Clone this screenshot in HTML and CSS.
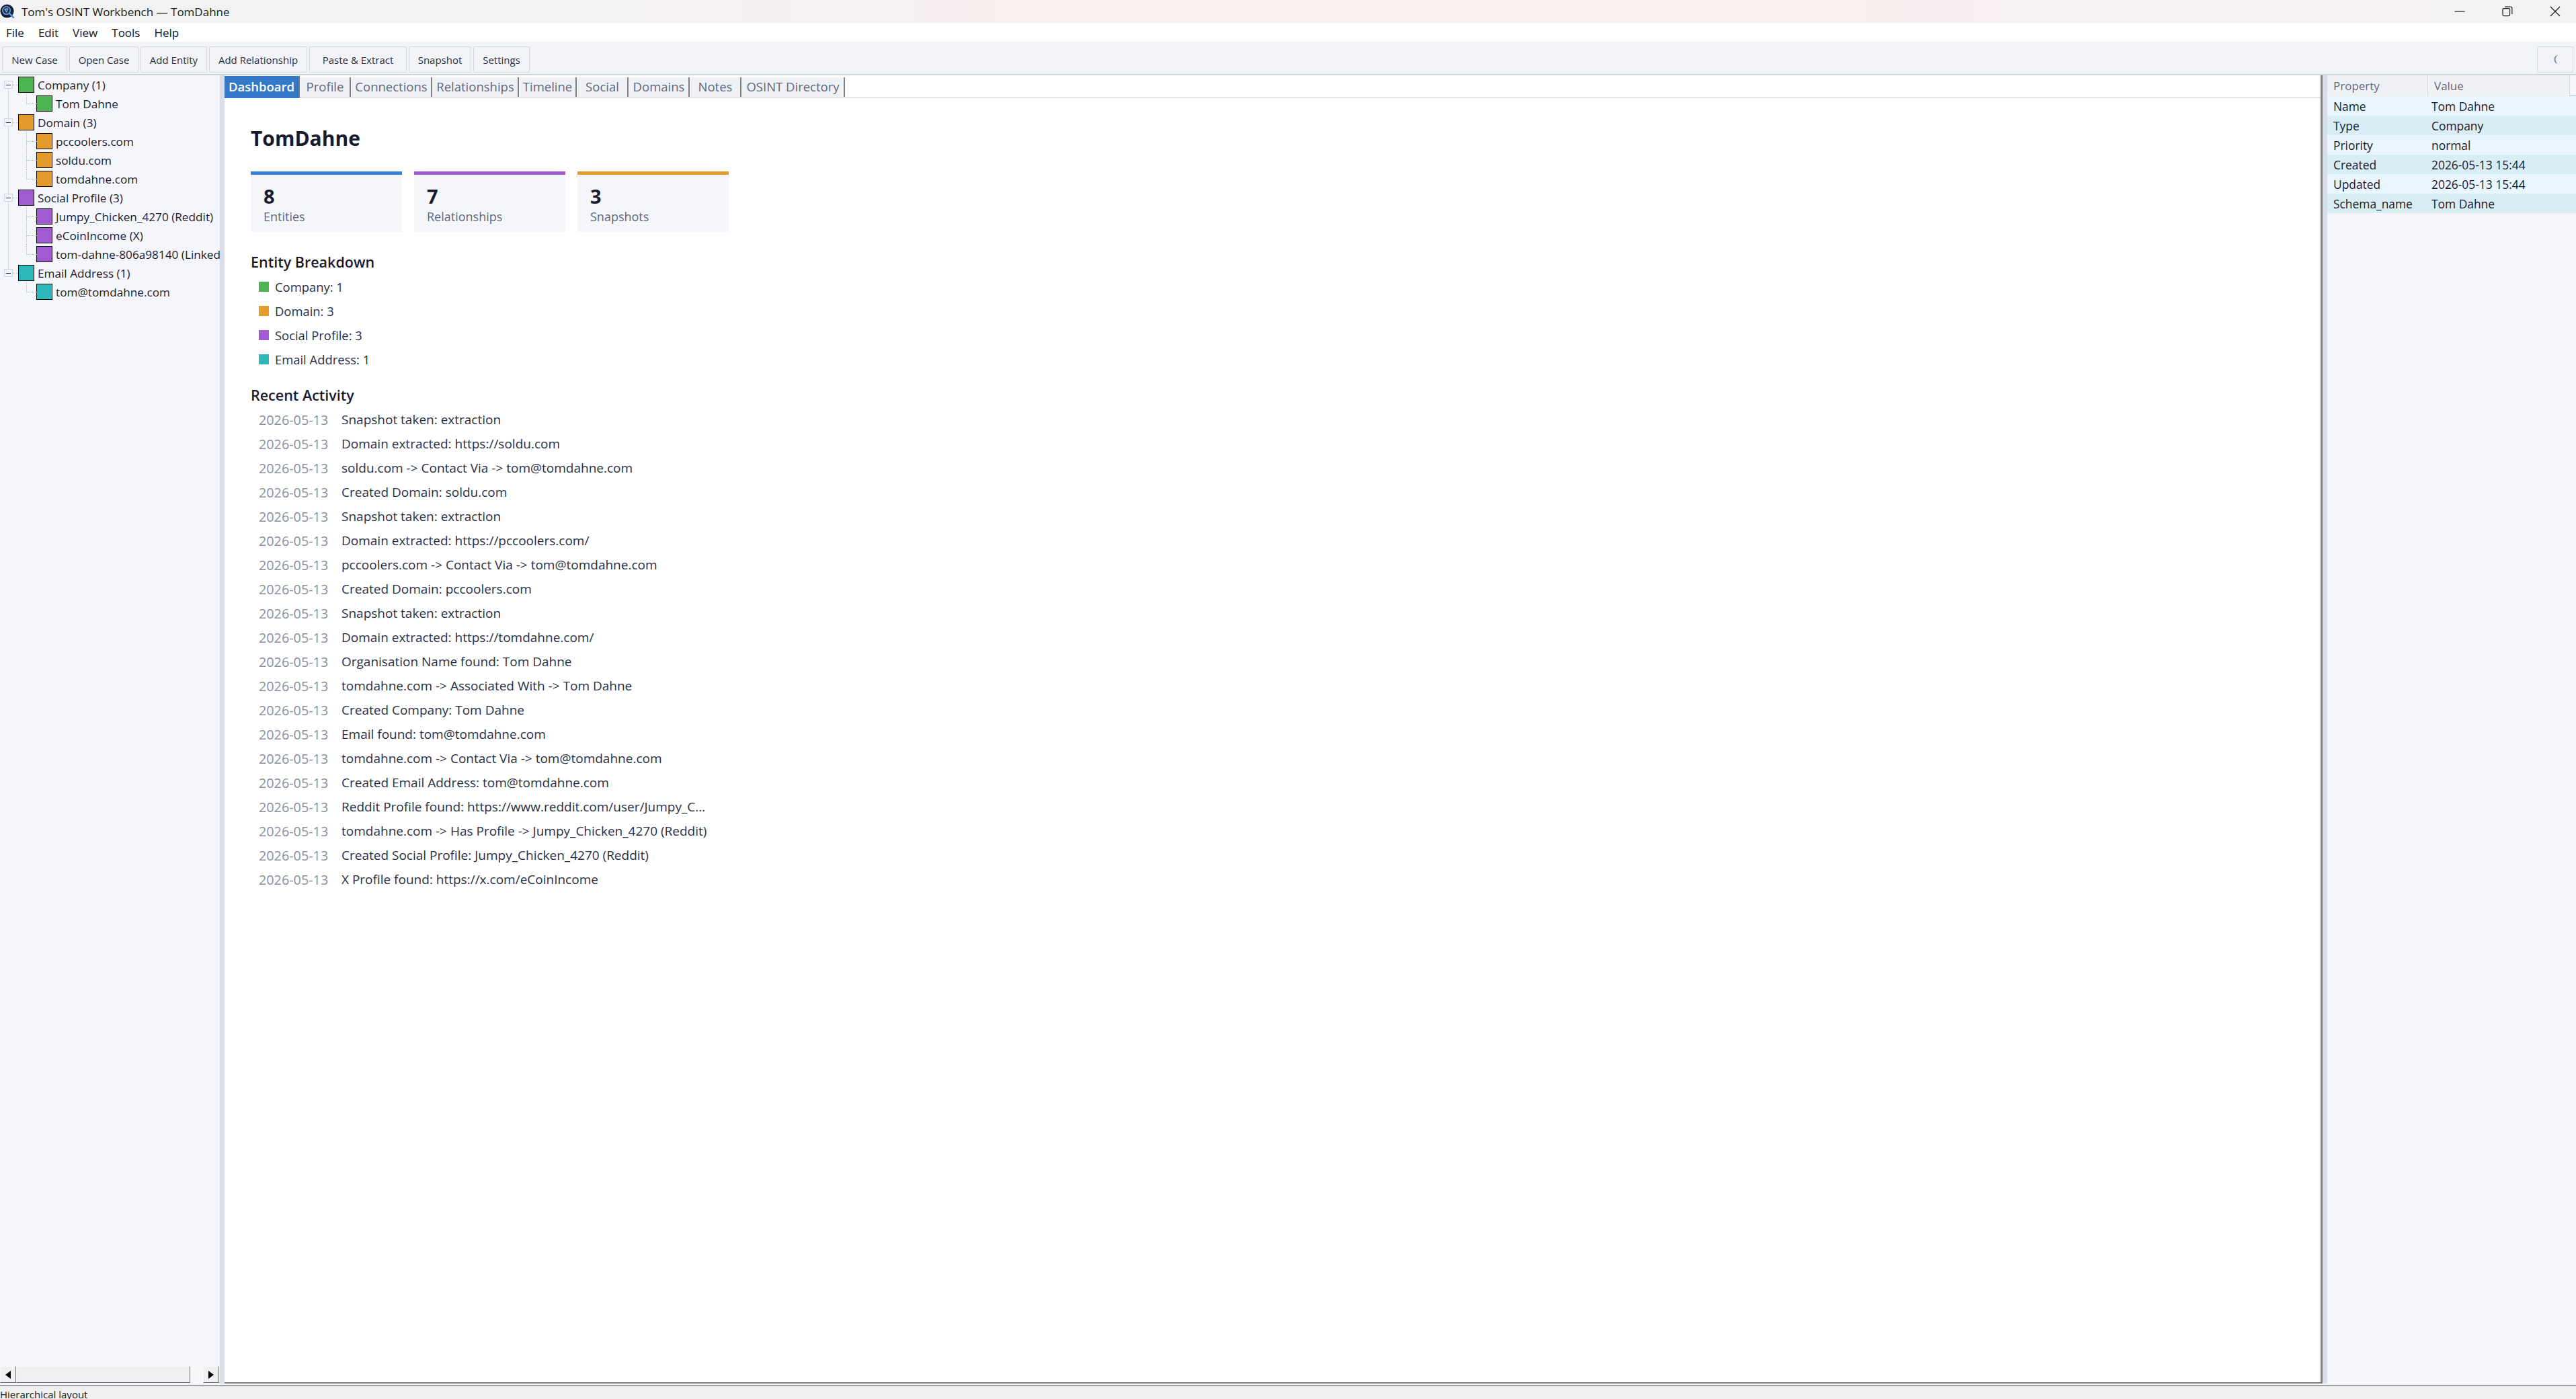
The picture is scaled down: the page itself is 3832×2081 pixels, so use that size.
FILE: index.html
```html
<!DOCTYPE html>
<html lang="en">
<head>
    <meta charset="UTF-8">
    <title>Tom's OSINT Workbench — TomDahne</title>
    <link rel="stylesheet" href="styles.css">
</head>
<body>

<div class="titlebar">
    <svg class="app-icon" viewBox="0 0 24 24" width="23" height="23">
        <circle cx="11" cy="11" r="10.5" fill="#14213d"/>
        <circle cx="10" cy="10" r="6" fill="#1f3557" stroke="#6f9fd8" stroke-width="1.6"/>
        <path d="M7.5 8 L12 7.5 L10 12 Z" fill="none" stroke="#9cc0e8" stroke-width="1.2"/>
        <path d="M14.5 14.5 L21 21" stroke="#4f94e0" stroke-width="2.6" stroke-linecap="round"/>
    </svg>
    <span class="title-text">Tom's OSINT Workbench — TomDahne</span>
    <div class="win-controls">
        <svg class="win-btn" viewBox="0 0 16 16" width="16" height="16"><path d="M0.5 8 H15.5" stroke="#1a1a1a" stroke-width="1.2"/></svg>
        <svg class="win-btn" viewBox="0 0 16 16" width="16" height="16"><rect x="1" y="3.6" width="10.6" height="11" rx="1.8" fill="none" stroke="#1a1a1a" stroke-width="1.2"/><path d="M4 1.2 H12.5 A2.4 2.4 0 0 1 14.9 3.6 V12" fill="none" stroke="#1a1a1a" stroke-width="1.2"/></svg>
        <svg class="win-btn" viewBox="0 0 16 16" width="16" height="16"><path d="M1 1 L15 15 M15 1 L1 15" stroke="#1a1a1a" stroke-width="1.2"/></svg>
    </div>
</div>

<div class="menubar">
    <span class="menu-item">File</span>
    <span class="menu-item">Edit</span>
    <span class="menu-item">View</span>
    <span class="menu-item">Tools</span>
    <span class="menu-item">Help</span>
</div>

<div class="toolbar">
    <button class="tool-btn w-newcase">New Case</button>
    <button class="tool-btn w-opencase">Open Case</button>
    <button class="tool-btn w-addentity">Add Entity</button>
    <button class="tool-btn w-addrel">Add Relationship</button>
    <button class="tool-btn w-paste">Paste &amp; Extract</button>
    <button class="tool-btn w-snapshot">Snapshot</button>
    <button class="tool-btn w-settings">Settings</button>
    <button class="tool-btn theme-btn"><svg viewBox="0 0 12 16" width="11" height="15"><path d="M9.5 1 A7.2 7.2 0 0 0 9.5 15 A8.8 8.8 0 0 1 9.5 1 Z" fill="#6f7f9e"/></svg></button>
</div>

<div class="main">
    <div class="tree-panel">
        <div class="tree">
            <div class="tree-group">
                <div class="tree-row top"><span class="expander"></span><span class="swatch green"></span><span class="label">Company (1)</span></div>
                <div class="tree-row child last"><span class="swatch green"></span><span class="label">Tom Dahne</span></div>
            </div>
            <div class="tree-group">
                <div class="tree-row top"><span class="expander"></span><span class="swatch orange"></span><span class="label">Domain (3)</span></div>
                <div class="tree-row child"><span class="swatch orange"></span><span class="label">pccoolers.com</span></div>
                <div class="tree-row child"><span class="swatch orange"></span><span class="label">soldu.com</span></div>
                <div class="tree-row child last"><span class="swatch orange"></span><span class="label">tomdahne.com</span></div>
            </div>
            <div class="tree-group">
                <div class="tree-row top"><span class="expander"></span><span class="swatch purple"></span><span class="label">Social Profile (3)</span></div>
                <div class="tree-row child"><span class="swatch purple"></span><span class="label">Jumpy_Chicken_4270 (Reddit)</span></div>
                <div class="tree-row child"><span class="swatch purple"></span><span class="label">eCoinIncome (X)</span></div>
                <div class="tree-row child last"><span class="swatch purple"></span><span class="label">tom-dahne-806a98140 (LinkedIn)</span></div>
            </div>
            <div class="tree-group final">
                <div class="tree-row top"><span class="expander"></span><span class="swatch teal"></span><span class="label">Email Address (1)</span></div>
                <div class="tree-row child last"><span class="swatch teal"></span><span class="label">tom@tomdahne.com</span></div>
            </div>
        </div>
        <div class="hscroll">
            <span class="scroll-btn"><svg viewBox="0 0 8 12" width="8" height="12"><path d="M8 0 V12 L0 6 Z" fill="#000"/></svg></span>
            <span class="scroll-thumb"></span>
            <span class="scroll-track"></span>
            <span class="scroll-btn"><svg viewBox="0 0 8 12" width="8" height="12"><path d="M0 0 V12 L8 6 Z" fill="#000"/></svg></span>
        </div>
    </div>

    <div class="splitter"></div>

    <div class="center">
        <div class="tabs">
            <span class="tab active w-dash">Dashboard</span>
            <span class="tab w-profile">Profile</span>
            <span class="tab w-conn">Connections</span>
            <span class="tab w-rel">Relationships</span>
            <span class="tab w-time">Timeline</span>
            <span class="tab w-social">Social</span>
            <span class="tab w-domains">Domains</span>
            <span class="tab w-notes">Notes</span>
            <span class="tab w-dir">OSINT Directory</span>
        </div>
        <div class="pane">
            <h1 class="case-name">TomDahne</h1>
            <div class="cards">
                <div class="card blue"><div class="card-num">8</div><div class="card-label">Entities</div></div>
                <div class="card violet"><div class="card-num">7</div><div class="card-label">Relationships</div></div>
                <div class="card amber"><div class="card-num">3</div><div class="card-label">Snapshots</div></div>
            </div>

            <h2 class="section">Entity Breakdown</h2>
            <div class="row kind"><span class="dot green"></span>Company: 1</div>
            <div class="row kind"><span class="dot orange"></span>Domain: 3</div>
            <div class="row kind"><span class="dot purple"></span>Social Profile: 3</div>
            <div class="row kind"><span class="dot teal"></span>Email Address: 1</div>

            <h2 class="section second">Recent Activity</h2>
            <div class="row"><span class="date">2026-05-13</span>Snapshot taken: extraction</div>
            <div class="row"><span class="date">2026-05-13</span>Domain extracted: https://soldu.com</div>
            <div class="row"><span class="date">2026-05-13</span>soldu.com -&gt; Contact Via -&gt; tom@tomdahne.com</div>
            <div class="row"><span class="date">2026-05-13</span>Created Domain: soldu.com</div>
            <div class="row"><span class="date">2026-05-13</span>Snapshot taken: extraction</div>
            <div class="row"><span class="date">2026-05-13</span>Domain extracted: https://pccoolers.com/</div>
            <div class="row"><span class="date">2026-05-13</span>pccoolers.com -&gt; Contact Via -&gt; tom@tomdahne.com</div>
            <div class="row"><span class="date">2026-05-13</span>Created Domain: pccoolers.com</div>
            <div class="row"><span class="date">2026-05-13</span>Snapshot taken: extraction</div>
            <div class="row"><span class="date">2026-05-13</span>Domain extracted: https://tomdahne.com/</div>
            <div class="row"><span class="date">2026-05-13</span>Organisation Name found: Tom Dahne</div>
            <div class="row"><span class="date">2026-05-13</span>tomdahne.com -&gt; Associated With -&gt; Tom Dahne</div>
            <div class="row"><span class="date">2026-05-13</span>Created Company: Tom Dahne</div>
            <div class="row"><span class="date">2026-05-13</span>Email found: tom@tomdahne.com</div>
            <div class="row"><span class="date">2026-05-13</span>tomdahne.com -&gt; Contact Via -&gt; tom@tomdahne.com</div>
            <div class="row"><span class="date">2026-05-13</span>Created Email Address: tom@tomdahne.com</div>
            <div class="row"><span class="date">2026-05-13</span>Reddit Profile found: https://www.reddit.com/user/Jumpy_C...</div>
            <div class="row"><span class="date">2026-05-13</span>tomdahne.com -&gt; Has Profile -&gt; Jumpy_Chicken_4270 (Reddit)</div>
            <div class="row"><span class="date">2026-05-13</span>Created Social Profile: Jumpy_Chicken_4270 (Reddit)</div>
            <div class="row"><span class="date">2026-05-13</span>X Profile found: https://x.com/eCoinIncome</div>
        </div>
    </div>

    <div class="splitter"></div>

    <div class="props">
        <div class="props-head">
            <span class="head-cell prop-col">Property</span>
            <span class="head-cell val-col">Value</span>
            <span class="head-rest"></span>
        </div>
        <div class="prop-row"><span class="prop-col">Name</span><span class="val-col">Tom Dahne</span></div>
        <div class="prop-row"><span class="prop-col">Type</span><span class="val-col">Company</span></div>
        <div class="prop-row"><span class="prop-col">Priority</span><span class="val-col">normal</span></div>
        <div class="prop-row"><span class="prop-col">Created</span><span class="val-col">2026-05-13 15:44</span></div>
        <div class="prop-row"><span class="prop-col">Updated</span><span class="val-col">2026-05-13 15:44</span></div>
        <div class="prop-row"><span class="prop-col">Schema_name</span><span class="val-col">Tom Dahne</span></div>
    </div>
</div>

<div class="statusbar">Hierarchical layout</div>

</body>
</html>
```

FILE: styles.css
```css
* {
    box-sizing: border-box;
}

html, body {
    margin: 0;
    height: 100%;
    overflow: hidden;
}

body {
    display: flex;
    flex-direction: column;
    font-family: "Open Sans", "Noto Sans", sans-serif;
    font-size: 17px;
    color: #1a1a2e;
    background: #f0f0f0;
}

.titlebar {
    height: 34px;
    display: flex;
    align-items: center;
    background: linear-gradient(90deg, #f3f2f2 0%, #f3f2f2 20%, #f8efef 40%, #f8efef 70%, #f4f2f2 100%);
    color: #1a1a1a;
}

.app-icon {
    margin: 1px 9px 0 0;
}

.title-text {
    font-size: 17px;
}

.win-controls {
    margin-left: auto;
    display: flex;
    gap: 55px;
    padding-right: 23px;
}

.menubar {
    height: 28px;
    background: #fff;
    display: flex;
    align-items: center;
    gap: 21px;
    padding-left: 9px;
    font-size: 17px;
    color: #111;
}

.toolbar {
    height: 50px;
    background: #f3f4f8;
    border-bottom: 2px solid #d0d3da;
    display: flex;
    gap: 3px;
    padding: 7px 4px 3px 3px;
}

.tool-btn {
    height: 39px;
    background: #f3f4f8;
    border: 1px solid #d5d8e0;
    border-radius: 2px;
    font-family: inherit;
    font-size: 15px;
    color: #2a3040;
    padding: 0;
}

.w-newcase { width: 97px; }
.w-opencase { width: 103px; }
.w-addentity { width: 99px; }
.w-addrel { width: 146px; }
.w-paste { width: 145px; }
.w-snapshot { width: 93px; }
.w-settings { width: 84px; }

.theme-btn {
    width: 54px;
    margin-left: auto;
    display: flex;
    align-items: center;
    justify-content: center;
}

.main {
    height: 1948px;
    display: flex;
    background: #f5f6fb;
}

.tree-panel {
    width: 327px;
    display: flex;
    flex-direction: column;
    justify-content: space-between;
    padding-bottom: 1px;
    overflow: hidden;
}

.tree {
    flex: 1;
    overflow: hidden;
    font-size: 17.2px;
}

.tree-group {
    position: relative;
}

.tree-group::before {
    content: "";
    position: absolute;
    left: 12px;
    top: 21px;
    bottom: -8px;
    border-left: 1px dotted #b8bcc6;
}

.tree-group.final::before {
    display: none;
}

.tree-row {
    height: 28px;
    display: flex;
    align-items: center;
    white-space: nowrap;
    position: relative;
}

.tree-row.top {
    padding-left: 6px;
}

.tree-row.top::after {
    content: "";
    position: absolute;
    left: 19px;
    top: 14px;
    width: 8px;
    border-top: 1px dotted #b8bcc6;
}

.tree-row.child {
    padding-left: 54px;
}

.tree-row.child::before {
    content: "";
    position: absolute;
    left: 39px;
    top: 0;
    width: 15px;
    height: 14px;
    border-left: 1px dotted #b8bcc6;
    border-bottom: 1px dotted #b8bcc6;
}

.tree-row.child:not(.last)::after {
    content: "";
    position: absolute;
    left: 39px;
    top: 14px;
    height: 14px;
    border-left: 1px dotted #b8bcc6;
}

.expander {
    width: 13px;
    height: 12px;
    margin-right: 8px;
    border: 1px solid #d0d5e0;
    background: linear-gradient(#1a1a1a, #1a1a1a) center / 7px 1px no-repeat;
    background-color: #f5f6fb;
    position: relative;
    z-index: 1;
}

.swatch {
    width: 24px;
    height: 24px;
    border: 1px solid #000;
    margin-right: 5px;
    flex: none;
}

.green { background-color: #4cb551; }
.orange { background-color: #e59c2d; }
.purple { background-color: #a05bd2; }
.teal { background-color: #2db9b9; }

.hscroll {
    height: 25px;
    display: flex;
    margin-bottom: 2px;
    flex: none;
}

.scroll-btn {
    width: 24px;
    background: #f0f0f0;
    border: 1px solid;
    border-color: #f8f8f8 #707070 #707070 #f8f8f8;
    display: flex;
    align-items: center;
    justify-content: center;
}

.scroll-thumb {
    width: 259px;
    background: #f0f0f0;
    border: 1px solid;
    border-color: #f8f8f8 #707070 #707070 #f8f8f8;
}

.scroll-track {
    width: 19px;
    background: repeating-conic-gradient(#f0f0f0 0 25%, #fff 0 50%) 0 0 / 2px 2px;
}

.splitter {
    width: 7px;
    background: #d9dee8;
    margin-bottom: 2px;
    flex: none;
}

.center {
    flex: 1;
    min-width: 0;
    display: flex;
    flex-direction: column;
    background: #fff;
    border-right: 3px solid #808080;
    border-bottom: 2px solid #808080;
    margin-bottom: 2px;
}

.tabs {
    height: 34px;
    display: flex;
    align-items: flex-start;
    padding-top: 1px;
    border-bottom: 2px solid #e4e4e4;
}

.tab {
    height: 29px;
    margin-top: 2px;
    padding-bottom: 2px;
    background: #f0f1f5;
    color: #5f6880;
    border-right: 2px solid #808080;
    border-left: 1px solid #f8f8f8;
    font-size: 18.5px;
    font-weight: 500;
    display: flex;
    align-items: center;
    justify-content: center;
    white-space: nowrap;
}

.tab.active {
    height: 33px;
    margin-top: 0;
    padding-bottom: 3px;
    background: #3478c8;
    color: #fff;
    border-left: 0;
    border-right-color: #5f7da6;
    font-weight: 600;
}

.w-dash { width: 112px; }
.w-profile { width: 76px; }
.w-conn { width: 121px; }
.w-rel { width: 129px; }
.w-time { width: 86px; }
.w-social { width: 77px; }
.w-domains { width: 91px; }
.w-notes { width: 77px; }
.w-dir { width: 154px; }

.pane {
    flex: 1;
    padding: 40px 0 0 39px;
    overflow: hidden;
}

.case-name {
    margin: 0;
    font-size: 30px;
    line-height: 40px;
    font-weight: 700;
}

.cards {
    display: flex;
    gap: 18px;
    margin-top: 29px;
}

.card {
    width: 225px;
    height: 90px;
    background: #f5f6fa;
    border-top: 5px solid;
    padding: 17px 19px;
}

.card.blue { border-top-color: #3580dc; }
.card.violet { border-top-color: #a05bd2; }
.card.amber { border-top-color: #e59c2d; }

.card-num {
    font-size: 29px;
    font-weight: 700;
    line-height: 30px;
}

.card-label {
    margin-top: 3px;
    font-size: 18px;
    line-height: 24px;
    color: #5f6880;
}

.section {
    margin: 27px 0 0;
    font-size: 21.5px;
    line-height: 36px;
    font-weight: 600;
}

.section.second {
    margin-top: 18px;
}

.row {
    height: 36px;
    display: flex;
    align-items: center;
    padding-left: 12px;
    font-size: 19px;
    color: #2a2f45;
    white-space: nowrap;
}

.row.kind {
    font-size: 18.4px;
}

.dot {
    width: 15px;
    height: 15px;
    margin-right: 9px;
}

.date {
    width: 123px;
    font-size: 19.8px;
    color: #8a90a0;
}

.props {
    width: 370px;
    flex: none;
    margin-bottom: 2px;
}

.props-head {
    height: 31px;
    display: flex;
    background: #f0f1f5;
}

.head-cell {
    display: flex;
    align-items: center;
    padding-left: 9px;
    color: #5f6880;
    border-right: 1px solid #d5d8e0;
    font-weight: 400;
}

.head-rest {
    flex: 1;
    background: #f5f6fb;
    border-bottom: 1px solid #b8bcc6;
}

.prop-col {
    width: 150px;
}

.val-col {
    width: 211px;
}

.prop-row {
    height: 29px;
    display: flex;
    align-items: center;
    background: #eaf6fd;
    padding-left: 9px;
    font-size: 17.4px;
}

.prop-row .prop-col {
    width: 146px;
}

.prop-row:nth-child(odd) {
    background: #d9edf4;
}

.statusbar {
    height: 21px;
    border-top: 2px solid #a0a0a0;
    background: #f0f0f0;
    font-size: 15px;
    line-height: 24px;
    color: #1a1a1a;
    overflow: hidden;
}
```
